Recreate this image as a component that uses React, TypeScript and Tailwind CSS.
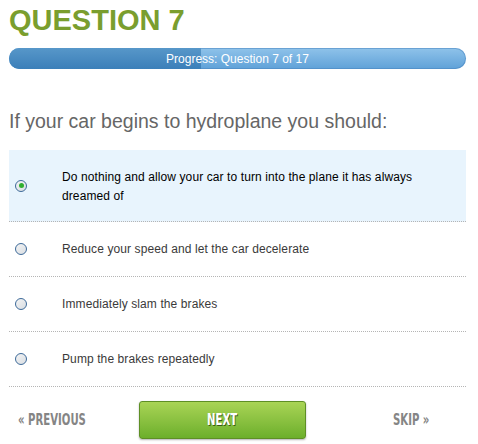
import { useState } from 'react';

const OPTIONS = [
  'Do nothing and allow your car to turn into the plane it has always dreamed of',
  'Reduce your speed and let the car decelerate',
  'Immediately slam the brakes',
  'Pump the brakes repeatedly',
];

function Radio({ checked }: { checked: boolean }) {
  return (
    <span className="flex h-[12px] w-[12px] items-center justify-center rounded-full border border-[#3d6a99] bg-gradient-to-br from-[#f4f4f4] to-[#d8dde2]">
      {checked && <span className="h-[5px] w-[5px] rounded-full bg-[#2fae2f]" />}
    </span>
  );
}

export default function App() {
  const [selected, setSelected] = useState(0);
  const current = 7;
  const total = 17;

  return (
    <div className="w-[478px] h-[444px] bg-white px-[9px] font-['Liberation_Sans',Arial,sans-serif]">
      <h1 className="pt-[4px] text-[29px] font-bold leading-[32px] text-[#7a9e2e]">QUESTION 7</h1>

      {/* Progress */}
      <div className="relative mt-[12px] h-[21px] w-[457px] overflow-hidden rounded-full bg-gradient-to-b from-[#8fc3ea] to-[#5fa1d8] shadow-[inset_0_0_0_1px_rgba(70,130,190,0.5)]">
        <div
          className="absolute inset-y-0 left-0 bg-gradient-to-b from-[#5797c9] to-[#3b7fb9]"
          style={{ width: `${(current / total) * 100 + 0.8}%` }}
        />
        <div className="relative flex h-full items-center justify-center text-[12px] text-white">
          Progress: Question {current} of {total}
        </div>
      </div>

      <p className="mt-[40px] text-[19.5px] leading-[24px] text-[#666]">
        If your car begins to hydroplane you should:
      </p>

      <ul className="mt-[17px] w-[457px]">
        {OPTIONS.map((opt, i) => {
          const active = i === selected;
          return (
            <li
              key={opt}
              onClick={() => setSelected(i)}
              className={`flex cursor-pointer items-center border-b border-dotted border-[#b5b5b5] ${
                active ? 'h-[72px] bg-[#e8f4fd] text-black' : 'h-[55px] text-[#3a3a3a]'
              }`}
            >
              <span className="ml-[6px] flex w-[47px] shrink-0">
                <Radio checked={active} />
              </span>
              <span className={`pr-[40px] text-[12px] leading-[19px] tracking-[0.1px] ${active ? 'pt-[3px]' : ''}`}>
                {opt}
              </span>
            </li>
          );
        })}
      </ul>

      {/* Footer */}
      <div className="mt-[14px] flex items-center font-['Liberation_Sans_Narrow','DejaVu_Sans_Condensed','Liberation_Sans',sans-serif] font-bold">
        <button className="ml-[9px] w-[121px] text-left text-[15px] text-[#858585]">
          <span className="inline-block origin-left scale-x-[0.75]">« PREVIOUS</span>
        </button>
        <button className="h-[38px] w-[167px] rounded-[3px] border border-[#5e8f25] bg-gradient-to-b from-[#a9d455] to-[#6caf2b] text-[15px] text-white shadow-[0_1px_2px_rgba(0,0,0,0.3)] [text-shadow:1px_1px_0_#3a5a17]">
          <span className="inline-block scale-x-[0.75]">NEXT</span>
        </button>
        <button className="ml-[87px] text-[15px] text-[#858585]">
          <span className="inline-block origin-left scale-x-[0.75]">SKIP »</span>
        </button>
      </div>
    </div>
  );
}
